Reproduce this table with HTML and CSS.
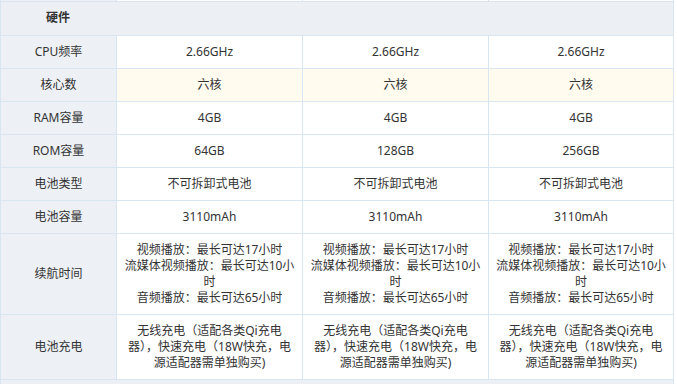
FILE: index.html
```html
<!DOCTYPE html>
<html lang="zh-CN">
<head>
<meta charset="utf-8">
<title>硬件参数</title>
<link rel="stylesheet" href="styles.css">
</head>
<body>
<table class="spec">
  <colgroup>
    <col class="c-label">
    <col class="c-val">
    <col class="c-val">
    <col class="c-val-last">
  </colgroup>
  <tbody>
    <tr class="prev">
      <td class="label"></td><td></td><td></td><td></td>
    </tr>
    <tr class="section">
      <th colspan="4">硬件</th>
    </tr>
    <tr>
      <td class="label">CPU频率</td><td>2.66GHz</td><td>2.66GHz</td><td>2.66GHz</td>
    </tr>
    <tr class="hl">
      <td class="label">核心数</td><td>六核</td><td>六核</td><td>六核</td>
    </tr>
    <tr>
      <td class="label">RAM容量</td><td>4GB</td><td>4GB</td><td>4GB</td>
    </tr>
    <tr>
      <td class="label">ROM容量</td><td>64GB</td><td>128GB</td><td>256GB</td>
    </tr>
    <tr>
      <td class="label">电池类型</td><td>不可拆卸式电池</td><td>不可拆卸式电池</td><td>不可拆卸式电池</td>
    </tr>
    <tr>
      <td class="label">电池容量</td><td>3110mAh</td><td>3110mAh</td><td>3110mAh</td>
    </tr>
    <tr>
      <td class="label">续航时间</td>
      <td>视频播放：最长可达17小时<br>流媒体视频播放：最长可达10小时<br>音频播放：最长可达65小时</td>
      <td>视频播放：最长可达17小时<br>流媒体视频播放：最长可达10小时<br>音频播放：最长可达65小时</td>
      <td>视频播放：最长可达17小时<br>流媒体视频播放：最长可达10小时<br>音频播放：最长可达65小时</td>
    </tr>
    <tr>
      <td class="label">电池充电</td>
      <td>无线充电（适配各类Qi充电器），快速充电（18W快充，电源适配器需单独购买)</td>
      <td>无线充电（适配各类Qi充电器），快速充电（18W快充，电源适配器需单独购买)</td>
      <td>无线充电（适配各类Qi充电器），快速充电（18W快充，电源适配器需单独购买)</td>
    </tr>
    <tr class="section">
      <th colspan="4">&nbsp;</th>
    </tr>
  </tbody>
</table>
</body>
</html>
```

FILE: styles.css
```css
html, body {
  margin: 0;
  padding: 0;
  background: #ffffff;
}

body {
  font-family: "Noto Sans", "Noto Sans CJK SC", sans-serif;
  font-size: 12px;
  color: #333333;
}

.spec {
  border-collapse: collapse;
  table-layout: fixed;
  width: 674px;
}

.c-label { width: 116px; }
.c-val { width: 186px; }
.c-val-last { width: 185px; }

.spec td,
.spec th {
  border: 1px solid #d8e6f1;
  padding: 8px 6px;
  line-height: 16px;
  text-align: center;
  vertical-align: middle;
  background: #ffffff;
}

.spec td.label {
  background: #edf1f5;
}

.spec tr.hl td {
  background: #fffbef;
}

.spec tr.hl td.label {
  background: #edf1f5;
}

.spec tr.prev td {
  border-top: hidden;
  padding: 0;
  height: 1px;
  line-height: 0;
  font-size: 0;
}

.spec tr.section th {
  background: #ecf0f5;
  text-align: left;
  font-weight: bold;
  padding: 8px 6px 9px 45px;
  line-height: 16px;
}
```
